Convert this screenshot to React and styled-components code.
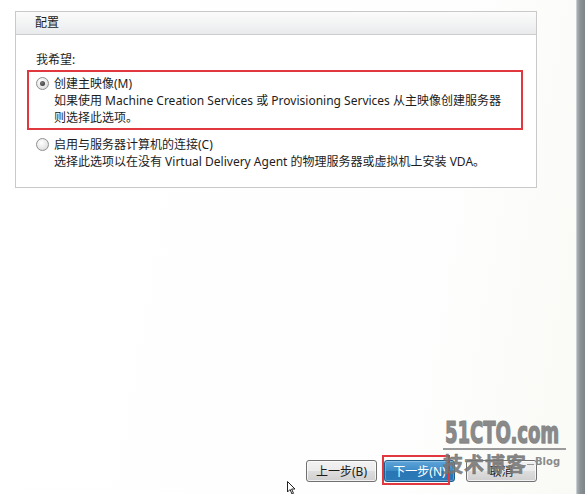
import styled, { createGlobalStyle } from "styled-components";

const GlobalStyle = createGlobalStyle`
  html, body {
    margin: 0;
    padding: 0;
    height: 100%;
  }
  #root {
    height: 100%;
  }
  body {
    font-family: "Noto Sans", "Noto Sans CJK SC", sans-serif;
    font-size: 12px;
    color: #1c1c1c;
    overflow: hidden;
  }
`;

const Window = styled.div`
  position: relative;
  display: flex;
  width: 585px;
  height: 494px;
  overflow: hidden;
  background: linear-gradient(100deg, #ffffff 0%, #fefefe 70%, #f9faf5 100%);
`;

const Main = styled.div`
  flex: 1;
  display: flex;
  flex-direction: column;
  padding: 11px 0 0 15px;
`;

const EdgeBar = styled.div`
  width: 8px;
  background: linear-gradient(90deg, #a9b1b5 0%, #8b9397 40%, #7d8589 100%);
  border-left: 1px solid #c9cfd1;
`;

const Panel = styled.section`
  width: 520px;
  border: 1px solid #c9c9c9;
  background: #fff;
`;

const PanelHeader = styled.div`
  height: 22px;
  line-height: 22px;
  padding-left: 19px;
  background: linear-gradient(180deg, #fbfbfb 0%, #f1f2f3 60%, #e9eaec 100%);
  border-bottom: 1px solid #cdcdcd;
  color: #222;
`;

const PanelBody = styled.div`
  padding: 16px 13px 13px 11px;
  display: flex;
  flex-direction: column;
`;

const Prompt = styled.div`
  line-height: 17px;
  padding-left: 9px;
  margin-bottom: 2px;
`;

const Option = styled.div`
  display: grid;
  grid-template-columns: 18px 1fr;
  padding: 3px 0 2px 7px;
  border: 2px solid ${(p) => (p.$highlight ? "#e0383e" : "transparent")};
  margin-bottom: ${(p) => (p.$highlight ? "1px" : "0")};
`;

const Radio = styled.span`
  margin-top: 2px;
  width: 11px;
  height: 11px;
  border-radius: 50%;
  border: 1px solid #8e8f8f;
  background: radial-gradient(circle at 40% 35%, #ffffff 0%, #e6e6e6 60%, #cfcfcf 100%);
  display: flex;
  align-items: center;
  justify-content: center;

  &::after {
    content: "";
    width: 5px;
    height: 5px;
    border-radius: 50%;
    background: radial-gradient(circle at 40% 35%, #7a7a7a 0%, #2b2b2b 100%);
    display: ${(p) => (p.$checked ? "block" : "none")};
  }
`;

const OptionText = styled.div`
  line-height: 17px;
`;

const Footer = styled.div`
  margin-top: auto;
  display: flex;
  padding: 0 0 12px 291px;
  align-items: center;
`;

const Button = styled.button`
  width: 71px;
  height: 22px;
  padding: 0;
  margin-left: ${(p) => p.$gap || 0}px;
  border-radius: 3px;
  font-family: inherit;
  font-size: 12px;
  border: 1px solid ${(p) => (p.$primary ? "#1d5e8e" : "#707070")};
  color: ${(p) => (p.$primary ? "#ffffff" : "#1c1c1c")};
  background: ${(p) =>
    p.$primary
      ? "linear-gradient(180deg, #5ea5d9 0%, #3d8bc6 48%, #2a76b4 52%, #2b79b7 100%)"
      : "linear-gradient(180deg, #f2f2f2 0%, #ebebeb 48%, #dddddd 52%, #cfcfcf 100%)"};
  box-shadow: inset 0 0 0 1px ${(p) => (p.$primary ? "rgba(255,255,255,0.25)" : "rgba(255,255,255,0.7)")};
`;

const FocusWrap = styled.div`
  position: relative;
  display: flex;
  margin-left: 7px;
`;

const FocusMark = styled.span`
  position: absolute;
  left: -2px;
  top: -5px;
  width: 64px;
  height: 26px;
  border: 2px solid #e0383e;
  pointer-events: none;
`;

const Watermark = styled.div`
  position: absolute;
  left: 443px;
  top: 417px;
  display: flex;
  flex-direction: column;
  color: #8a8a8a;
  pointer-events: none;
`;

const MarkTitle = styled.div`
  width: 123px;
  height: 31px;
  border-bottom: 2px solid #9a9a9a;
  white-space: nowrap;
`;

const MarkTitleText = styled.span`
  display: inline-block;
  margin-left: 2px;
  font-family: "DejaVu Sans", sans-serif;
  font-weight: 700;
  font-size: 30px;
  line-height: 32px;
  transform: scaleX(0.6);
  transform-origin: left center;
  -webkit-text-stroke: 1.2px #858585;
  text-shadow: 1px 1px 0 #d0d0d0;
`;

const MarkRow = styled.div`
  display: flex;
  align-items: flex-start;
  margin-top: 3px;
`;

const MarkCn = styled.div`
  font-family: "Noto Sans CJK SC", sans-serif;
  font-weight: bold;
  font-size: 20px;
  line-height: 22px;
  letter-spacing: 1px;
  color: rgba(118, 118, 118, 0.9);
  -webkit-text-stroke: 0.6px rgba(118, 118, 118, 0.9);
`;

const MarkBlog = styled.div`
  font-family: "DejaVu Sans", sans-serif;
  font-weight: bold;
  font-size: 10px;
  line-height: 12px;
  padding-left: 8px;
  margin-top: 3px;
  background: linear-gradient(#9a9a9a, #9a9a9a) no-repeat 0 8px / 7px 1px;
`;

const Cursor = styled.svg`
  position: absolute;
  left: 287px;
  top: 481px;
`;

export default function App() {
  return (
    <>
      <GlobalStyle />
      <Window>
        <Main>
          <Panel>
            <PanelHeader>配置</PanelHeader>
            <PanelBody>
              <Prompt>我希望:</Prompt>
              <Option $highlight>
                <Radio $checked />
                <OptionText>
                  创建主映像(M)
                  <br />
                  如果使用 Machine Creation Services 或 Provisioning Services 从主映像创建服务器
                  <br />
                  则选择此选项。
                </OptionText>
              </Option>
              <Option>
                <Radio />
                <OptionText>
                  启用与服务器计算机的连接(C)
                  <br />
                  选择此选项以在没有 Virtual Delivery Agent 的物理服务器或虚拟机上安装 VDA。
                </OptionText>
              </Option>
            </PanelBody>
          </Panel>
          <Footer>
            <Button>上一步(B)</Button>
            <FocusWrap>
              <Button $primary>下一步(N)</Button>
              <FocusMark />
            </FocusWrap>
            <Button $gap={11}>取消</Button>
          </Footer>
        </Main>
        <EdgeBar />
        <Watermark>
          <MarkTitle>
            <MarkTitleText>51CTO.com</MarkTitleText>
          </MarkTitle>
          <MarkRow>
            <MarkCn>技术博客</MarkCn>
            <MarkBlog>Blog</MarkBlog>
          </MarkRow>
        </Watermark>
        <Cursor width="10" height="14" viewBox="0 0 10 14">
          <path d="M0.5 0.5 L0.5 11 L3 8.5 L5 13 L6.5 12.3 L4.6 8 L8 8 Z" fill="#fff" stroke="#222" strokeWidth="1" />
        </Cursor>
      </Window>
    </>
  );
}
